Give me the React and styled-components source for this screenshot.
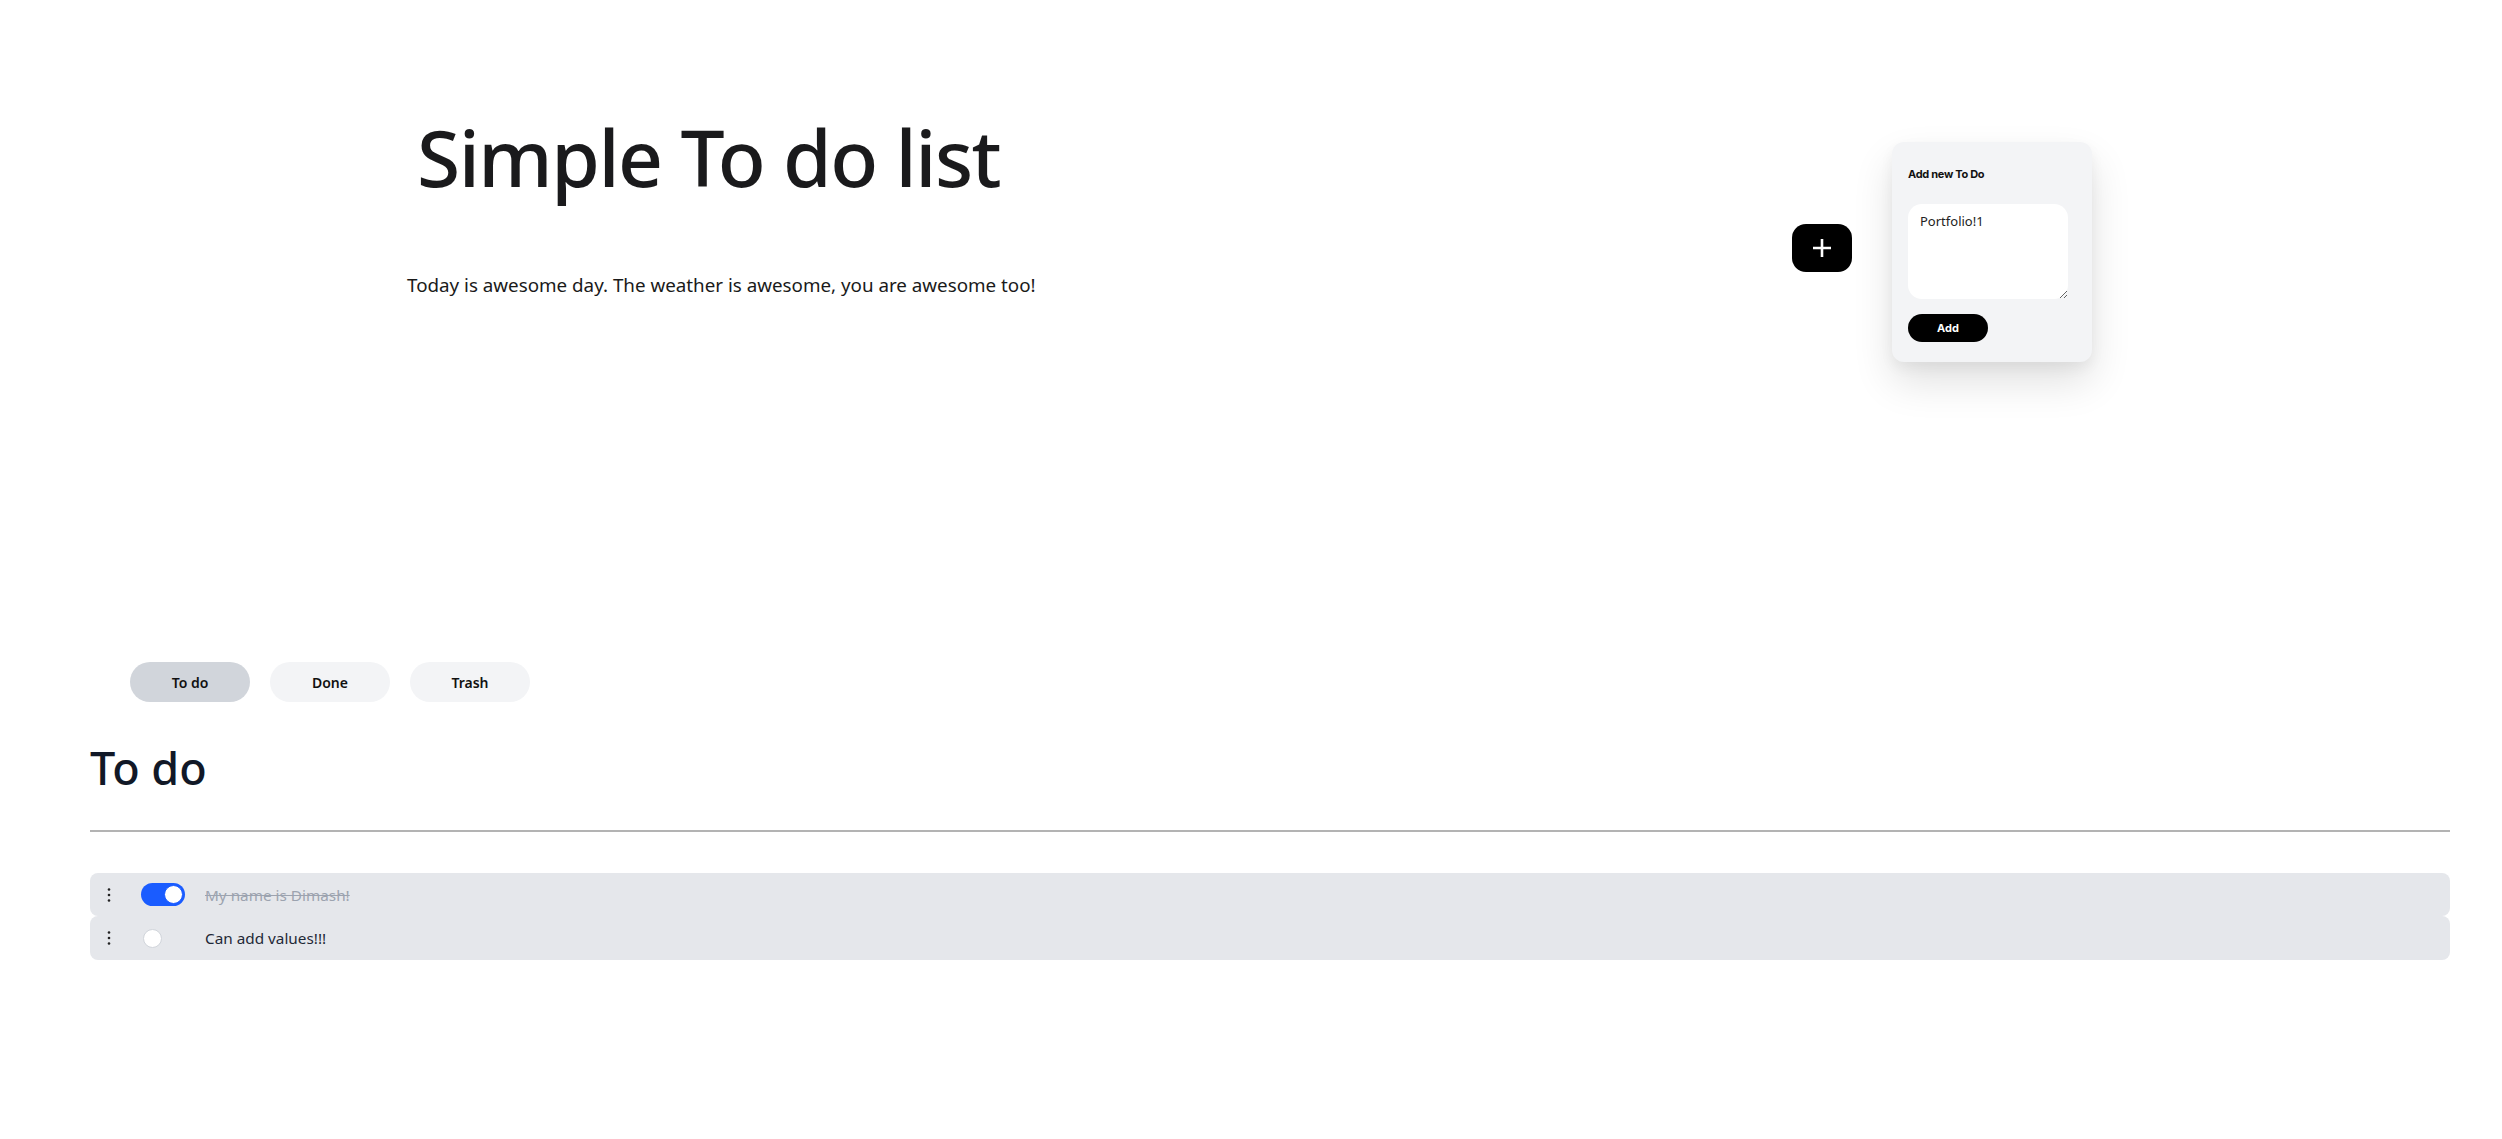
import React from 'react';
import styled, { createGlobalStyle } from 'styled-components';

const GlobalStyle = createGlobalStyle`
  body {
    margin: 0;
    background: #ffffff;
    font-family: 'Noto Sans', 'Open Sans', sans-serif;
    color: #1a1a1a;
  }
`;

const Page = styled.div`
  width: 2502px;
  min-height: 1139px;
  padding: 0 52px 0 90px;
  box-sizing: border-box;
`;

const Header = styled.header`
  display: flex;
  justify-content: space-between;
  align-items: flex-start;
  padding: 0 358px 0 317px;
`;

const Hero = styled.div`
  width: 495px;
  padding-top: 118px;
`;

const Title = styled.h1`
  margin: 0 0 0 10px;
  font-size: 78.5px;
  font-weight: 500;
  line-height: 1;
  letter-spacing: -1.5px;
  white-space: nowrap;
  color: #1a1a1c;
`;

const Tagline = styled.p`
  margin: 76px 0 0;
  font-size: 18.8px;
  line-height: 1.3;
  white-space: nowrap;
  color: #1a1a1a;
`;

const AddArea = styled.div`
  display: flex;
  align-items: center;
  gap: 40px;
  margin-top: 142px;
`;

const PlusButton = styled.button`
  width: 60px;
  height: 48px;
  border: none;
  border-radius: 14px;
  background: #000;
  display: flex;
  align-items: center;
  justify-content: center;
  padding: 0;
  margin-top: -8px;
`;

const Panel = styled.div`
  width: 200px;
  box-sizing: border-box;
  padding: 24px 24px 20px 16px;
  background: #f3f4f6;
  border-radius: 12px;
  box-shadow: 0 20px 40px rgba(0, 0, 0, 0.12), 0 6px 14px rgba(0, 0, 0, 0.05);
`;

const PanelTitle = styled.h3`
  margin: 0;
  font-family: 'Inter', sans-serif;
  font-size: 11px;
  font-weight: 700;
  letter-spacing: -0.3px;
  line-height: 16px;
  color: #111;
`;

const Field = styled.textarea`
  display: block;
  width: 160px;
  height: 95px;
  box-sizing: border-box;
  margin-top: 22px;
  padding: 8px 12px;
  border: none;
  border-radius: 14px;
  background: #fff;
  font-family: 'Noto Sans', sans-serif;
  font-size: 13px;
  color: #222;
  resize: vertical;
  outline: none;
`;

const SmallButton = styled.button`
  display: block;
  width: 80px;
  height: 28px;
  margin-top: 15px;
  border: none;
  border-radius: 14px;
  background: #000;
  color: #fff;
  font-family: 'Inter', sans-serif;
  font-size: 11px;
  font-weight: 700;
`;

const Tabs = styled.nav`
  display: flex;
  gap: 20px;
  margin-top: 300px;
  padding-left: 40px;
`;

const Tab = styled.button`
  width: 120px;
  height: 40px;
  border: none;
  border-radius: 20px;
  background: ${({ active }) => (active ? '#d1d5db' : '#f3f4f6')};
  font-family: 'Noto Sans', sans-serif;
  font-size: 14px;
  font-weight: 600;
  color: #111;
`;

const SectionTitle = styled.h2`
  margin: 39px 0 0;
  font-size: 45px;
  font-weight: 500;
  line-height: 1.2;
  color: #111827;
`;

const Rule = styled.hr`
  margin: 35px 0 0;
  border: none;
  height: 2px;
  background: #b3b3b3;
`;

const List = styled.ul`
  list-style: none;
  margin: 41px 0 0;
  padding: 0;
`;

const Row = styled.li`
  display: flex;
  align-items: center;
  height: ${({ tall }) => (tall ? 44 : 43)}px;
  border-radius: 8px;
  background: #e5e7eb;
`;

const Handle = styled.span`
  width: 16px;
  margin-left: 11px;
  display: flex;
  justify-content: center;
`;

const SwitchTrack = styled.span`
  position: relative;
  width: 44px;
  height: 23px;
  margin-left: 24px;
  border-radius: 12px;
  background: ${({ on }) => (on ? '#1a5cff' : 'transparent')};
`;

const Knob = styled.span`
  position: absolute;
  top: 2px;
  left: ${({ on }) => (on ? 23 : 2)}px;
  width: 19px;
  height: 19px;
  box-sizing: border-box;
  border-radius: 50%;
  background: #fff;
  border: 1px solid ${({ on }) => (on ? '#1a5cff' : '#d1d5db')};
`;

const Label = styled.span`
  margin-left: 20px;
  font-size: 15.3px;
  color: ${({ done }) => (done ? '#9ca3af' : '#1f2937')};
  text-decoration: ${({ done }) => (done ? 'line-through' : 'none')};
`;

const DotsIcon = () => (
  <svg width="4" height="16" viewBox="0 0 4 16">
    <circle cx="2" cy="2.5" r="1.3" fill="#222" />
    <circle cx="2" cy="8" r="1.3" fill="#222" />
    <circle cx="2" cy="13.5" r="1.3" fill="#222" />
  </svg>
);

const PlusIcon = () => (
  <svg width="24" height="24" viewBox="0 0 24 24">
    <path d="M12 3v18M3 12h18" stroke="#fff" strokeWidth="2.6" />
  </svg>
);

const todos = [
  { text: 'My name is Dimash!', done: true },
  { text: 'Can add values!!!', done: false },
];

export default function App() {
  return (
    <>
      <GlobalStyle />
      <Page>
        <Header>
          <Hero>
            <Title>Simple To do list</Title>
            <Tagline>Today is awesome day. The weather is awesome, you are awesome too!</Tagline>
          </Hero>
          <AddArea>
            <PlusButton>
              <PlusIcon />
            </PlusButton>
            <Panel>
              <PanelTitle>Add new To Do</PanelTitle>
              <Field defaultValue="Portfolio!1" />
              <SmallButton>Add</SmallButton>
            </Panel>
          </AddArea>
        </Header>

        <Tabs>
          <Tab active>To do</Tab>
          <Tab>Done</Tab>
          <Tab>Trash</Tab>
        </Tabs>

        <SectionTitle>To do</SectionTitle>
        <Rule />

        <List>
          {todos.map(({ text, done }, idx) => (
            <Row key={idx} tall={idx > 0}>
              <Handle>
                <DotsIcon />
              </Handle>
              <SwitchTrack on={done}>
                <Knob on={done} />
              </SwitchTrack>
              <Label done={done}>{text}</Label>
            </Row>
          ))}
        </List>
      </Page>
    </>
  );
}
